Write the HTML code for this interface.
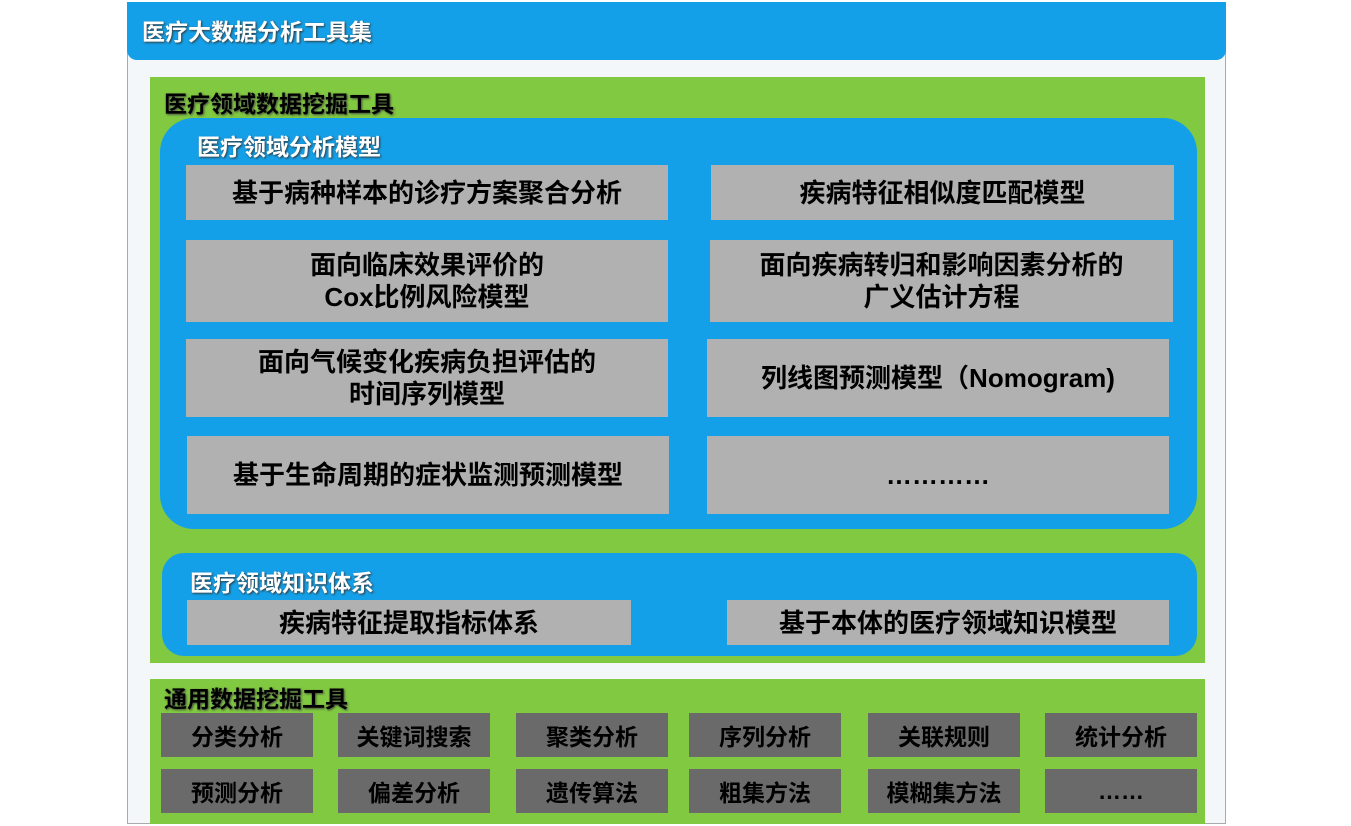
<!DOCTYPE html><html><head><meta charset="utf-8"><style>
body{margin:0;width:1351px;height:826px;background:#fff;position:relative;overflow:hidden;font-family:"Liberation Sans","Noto Sans CJK SC",sans-serif;font-weight:bold}
div{position:absolute;box-sizing:border-box}
.g{background:#b1b1b1;color:#000;font-size:26px;display:flex;align-items:center;justify-content:center;text-align:center;line-height:32px}
.t{background:#6a6a6a;color:#000;font-size:23px;display:flex;align-items:center;justify-content:center;width:152px;height:44px}
.w{color:#fff;text-shadow:1px 1px 2px #333}
.k{color:#000;text-shadow:1px 1px 2px #444}
</style></head><body>
<div style="left:127px;top:2px;width:1099px;height:822px;background:#f4f7fa;border:1px solid #aaa"></div>
<div style="left:127px;top:2px;width:1099px;height:58px;background:#14a0e8;border-radius:0 0 10px 10px"></div>
<div class="w" style="left:142px;top:13px;font-size:23px">医疗大数据分析工具集</div>
<div style="left:150px;top:77px;width:1055px;height:586px;background:#80c940"></div>
<div class="k" style="left:164px;top:85px;font-size:23px">医疗领域数据挖掘工具</div>
<div style="left:160px;top:118px;width:1037px;height:411px;background:#14a0e8;border-radius:34px"></div>
<div class="w" style="left:197px;top:128px;font-size:23px">医疗领域分析模型</div>
<div class="g" style="left:186px;top:165px;width:482px;height:55px">基于病种样本的诊疗方案聚合分析</div>
<div class="g" style="left:711px;top:165px;width:463px;height:55px">疾病特征相似度匹配模型</div>
<div class="g" style="left:186px;top:240px;width:482px;height:82px">面向临床效果评价的<br>Cox比例风险模型</div>
<div class="g" style="left:710px;top:240px;width:463px;height:82px">面向疾病转归和影响因素分析的<br>广义估计方程</div>
<div class="g" style="left:186px;top:339px;width:482px;height:78px">面向气候变化疾病负担评估的<br>时间序列模型</div>
<div class="g" style="left:707px;top:339px;width:462px;height:78px">列线图预测模型（Nomogram)</div>
<div class="g" style="left:187px;top:436px;width:482px;height:78px">基于生命周期的症状监测预测模型</div>
<div class="g" style="left:707px;top:436px;width:462px;height:78px">…………</div>
<div style="left:162px;top:553px;width:1035px;height:103px;background:#14a0e8;border-radius:22px"></div>
<div class="w" style="left:190px;top:564px;font-size:23px">医疗领域知识体系</div>
<div class="g" style="left:187px;top:600px;width:444px;height:45px">疾病特征提取指标体系</div>
<div class="g" style="left:727px;top:600px;width:442px;height:45px">基于本体的医疗领域知识模型</div>
<div style="left:150px;top:679px;width:1055px;height:145px;background:#80c940"></div>
<div class="k" style="left:164px;top:680px;font-size:23px">通用数据挖掘工具</div>
<div class="t" style="left:161px;top:713px">分类分析</div>
<div class="t" style="left:338px;top:713px">关键词搜索</div>
<div class="t" style="left:516px;top:713px">聚类分析</div>
<div class="t" style="left:689px;top:713px">序列分析</div>
<div class="t" style="left:868px;top:713px">关联规则</div>
<div class="t" style="left:1045px;top:713px">统计分析</div>
<div class="t" style="left:161px;top:769px">预测分析</div>
<div class="t" style="left:338px;top:769px">偏差分析</div>
<div class="t" style="left:516px;top:769px">遗传算法</div>
<div class="t" style="left:689px;top:769px">粗集方法</div>
<div class="t" style="left:868px;top:769px">模糊集方法</div>
<div class="t" style="left:1045px;top:769px">……</div>
</body></html>
